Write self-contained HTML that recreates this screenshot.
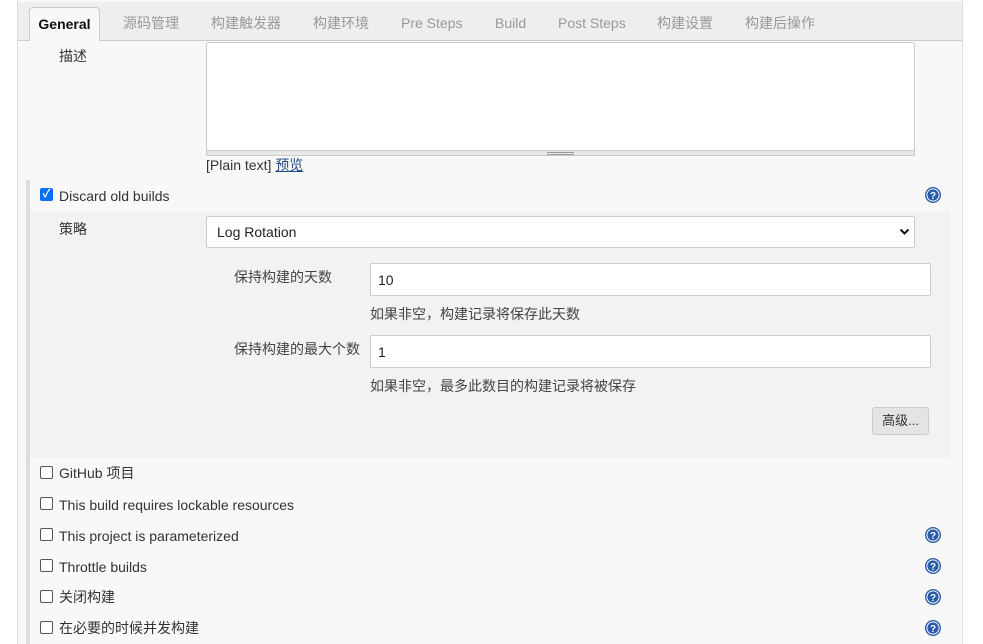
<!DOCTYPE html>
<html><head><meta charset="utf-8"><style>
body{margin:0;width:983px;height:644px;overflow:hidden;background:#fff;font-family:"Liberation Sans","Noto Sans CJK SC",sans-serif;font-size:14px;line-height:1.15;color:#333;position:relative}
.a{position:absolute}
.cont{left:17px;top:0;width:944px;height:644px;background:#f8f8f8;border-left:1px solid #ddd;border-right:1px solid #ddd}
.tabbar{left:18px;top:2px;width:944px;height:38px;background:#eee;border-bottom:1px solid #ccc}
.tab{top:15px;color:#999;font-size:14px}
.gen{left:29px;top:7px;width:71px;height:34px;background:#f8f8f8;border:1px solid #ccc;border-bottom:none;border-radius:4px 4px 0 0;font-weight:bold;color:#111;text-align:center;line-height:32px;box-sizing:border-box}
.inp{background:#fff;border:1px solid #ccc;border-radius:2px;box-sizing:border-box}
.cb{width:13px;height:13px;border:1px solid #555;border-radius:2px;background:#fff;box-sizing:border-box}
.help{width:16px;height:16px}
</style></head><body>
<div class="a cont"></div>
<div class="a tabbar"></div>
<div class="a gen">General</div>
<div class="a tab" style="left:123px">源码管理</div>
<div class="a tab" style="left:211px">构建触发器</div>
<div class="a tab" style="left:313px">构建环境</div>
<div class="a tab" style="left:401px">Pre Steps</div>
<div class="a tab" style="left:495px">Build</div>
<div class="a tab" style="left:558px">Post Steps</div>
<div class="a tab" style="left:657px">构建设置</div>
<div class="a tab" style="left:745px">构建后操作</div>

<div class="a" style="left:59px;top:48px">描述</div>
<div class="a inp" style="left:206px;top:42px;width:709px;height:114px;border-radius:3px"></div>
<div class="a" style="left:206px;top:150px;width:709px;height:6px;background:#e8e8e8;border:1px solid #ccc;box-sizing:border-box"></div>
<div class="a" style="left:547px;top:152px;width:27px;height:1px;background:#999"></div>
<div class="a" style="left:547px;top:154px;width:27px;height:1px;background:#999"></div>
<div class="a" style="left:206px;top:157px">[Plain text] <span style="color:#204a87;text-decoration:underline">预览</span></div>

<div class="a" style="left:26px;top:180px;width:4px;height:464px;background:#ddd"></div>
<div class="a" style="left:40px;top:188px;width:13px;height:13px;background:#0a6ff2;border-radius:2px;color:#fff;font-size:11px;line-height:13px;text-align:center;font-weight:bold">✓</div>
<div class="a" style="left:59px;top:188px">Discard old builds</div>
<svg class="a help" style="left:925px;top:187px" viewBox="0 0 16 16"><circle cx="8" cy="8" r="7.3" fill="#fff" stroke="#2a5ca8" stroke-width="1.4"/><circle cx="8" cy="8" r="5.6" fill="#2a5ca8"/><text x="8" y="12" font-size="10" font-weight="bold" fill="#fff" text-anchor="middle" font-family="Liberation Sans">?</text></svg>

<div class="a" style="left:30px;top:211px;width:920px;height:247px;background:#f2f2f2"></div>
<div class="a" style="left:59px;top:221px">策略</div>
<div class="a inp" style="left:206px;top:216px;width:709px;height:32px"></div>
<div class="a" style="left:217px;top:224px;color:#222">Log Rotation</div>
<svg class="a" style="left:899px;top:228px" width="11" height="8" viewBox="0 0 11 8"><path d="M1.5 1.5 L5.5 5.5 L9.5 1.5" fill="none" stroke="#111" stroke-width="2"/></svg>

<div class="a" style="left:234px;top:269px;color:#444">保持构建的天数</div>
<div class="a inp" style="left:370px;top:263px;width:561px;height:33px"></div>
<div class="a" style="left:378px;top:272px;color:#222">10</div>
<div class="a" style="left:370px;top:306px;color:#444">如果非空，构建记录将保存此天数</div>
<div class="a" style="left:234px;top:341px;color:#444">保持构建的最大个数</div>
<div class="a inp" style="left:370px;top:335px;width:561px;height:33px"></div>
<div class="a" style="left:378px;top:344px;color:#222">1</div>
<div class="a" style="left:370px;top:378px;color:#444">如果非空，最多此数目的构建记录将被保存</div>
<div class="a" style="left:872px;top:407px;width:57px;height:28px;background:#e4e4e4;border:1px solid #ccc;border-radius:3px;box-sizing:border-box;text-align:center;line-height:26px;font-size:13px;color:#333">高级...</div>

<div class="a cb" style="left:40px;top:466px"></div><div class="a" style="left:59px;top:465px">GitHub 项目</div>
<div class="a cb" style="left:40px;top:497px"></div><div class="a" style="left:59px;top:497px">This build requires lockable resources</div>
<div class="a cb" style="left:40px;top:528px"></div><div class="a" style="left:59px;top:528px">This project is parameterized</div>
<div class="a cb" style="left:40px;top:559px"></div><div class="a" style="left:59px;top:559px">Throttle builds</div>
<div class="a cb" style="left:40px;top:590px"></div><div class="a" style="left:59px;top:589px">关闭构建</div>
<div class="a cb" style="left:40px;top:621px"></div><div class="a" style="left:59px;top:620px">在必要的时候并发构建</div>
<svg class="a help" style="left:925px;top:527px" viewBox="0 0 16 16"><circle cx="8" cy="8" r="7.3" fill="#fff" stroke="#2a5ca8" stroke-width="1.4"/><circle cx="8" cy="8" r="5.6" fill="#2a5ca8"/><text x="8" y="12" font-size="10" font-weight="bold" fill="#fff" text-anchor="middle" font-family="Liberation Sans">?</text></svg>
<svg class="a help" style="left:925px;top:558px" viewBox="0 0 16 16"><circle cx="8" cy="8" r="7.3" fill="#fff" stroke="#2a5ca8" stroke-width="1.4"/><circle cx="8" cy="8" r="5.6" fill="#2a5ca8"/><text x="8" y="12" font-size="10" font-weight="bold" fill="#fff" text-anchor="middle" font-family="Liberation Sans">?</text></svg>
<svg class="a help" style="left:925px;top:589px" viewBox="0 0 16 16"><circle cx="8" cy="8" r="7.3" fill="#fff" stroke="#2a5ca8" stroke-width="1.4"/><circle cx="8" cy="8" r="5.6" fill="#2a5ca8"/><text x="8" y="12" font-size="10" font-weight="bold" fill="#fff" text-anchor="middle" font-family="Liberation Sans">?</text></svg>
<svg class="a help" style="left:925px;top:620px" viewBox="0 0 16 16"><circle cx="8" cy="8" r="7.3" fill="#fff" stroke="#2a5ca8" stroke-width="1.4"/><circle cx="8" cy="8" r="5.6" fill="#2a5ca8"/><text x="8" y="12" font-size="10" font-weight="bold" fill="#fff" text-anchor="middle" font-family="Liberation Sans">?</text></svg>
</body></html>
